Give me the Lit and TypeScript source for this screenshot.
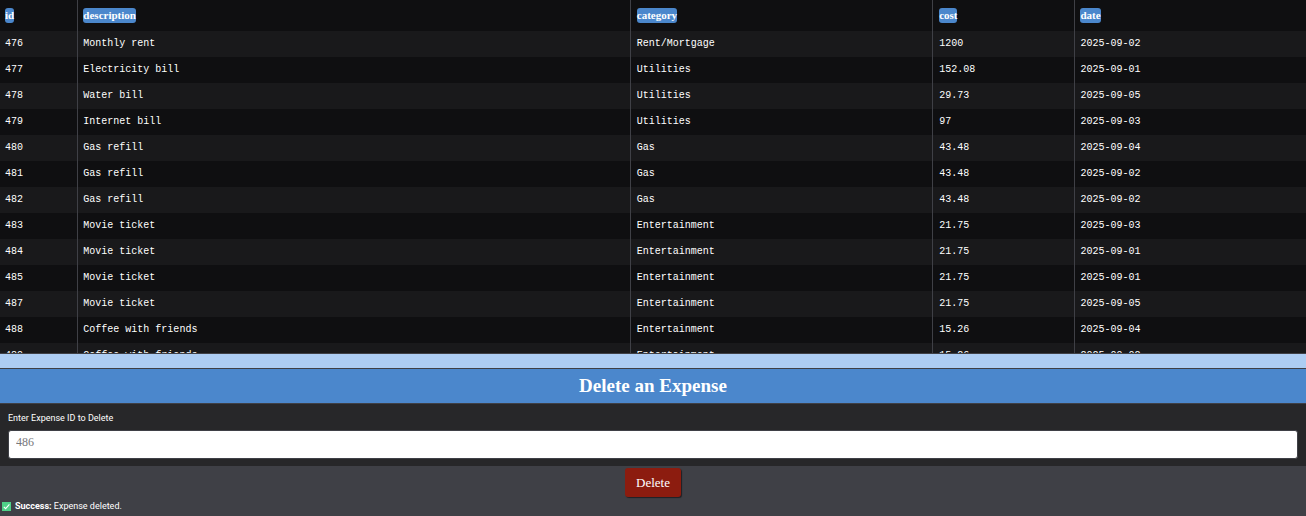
import { LitElement, html, css } from "lit";
import { customElement, state } from "lit/decorators.js";

interface Expense {
  id: number;
  description: string;
  category: string;
  cost: string;
  date: string;
}

const row = (id: number, description: string, category: string, cost: string, date: string): Expense => ({
  id,
  description,
  category,
  cost,
  date,
});

const COLUMNS = ["id", "description", "category", "cost", "date"] as const;

@customElement("app-root")
export class AppRoot extends LitElement {
  @state() private expenses: Expense[] = [
    row(476, "Monthly rent", "Rent/Mortgage", "1200", "2025-09-02"),
    row(477, "Electricity bill", "Utilities", "152.08", "2025-09-01"),
    row(478, "Water bill", "Utilities", "29.73", "2025-09-05"),
    row(479, "Internet bill", "Utilities", "97", "2025-09-03"),
    row(480, "Gas refill", "Gas", "43.48", "2025-09-04"),
    row(481, "Gas refill", "Gas", "43.48", "2025-09-02"),
    row(482, "Gas refill", "Gas", "43.48", "2025-09-02"),
    row(483, "Movie ticket", "Entertainment", "21.75", "2025-09-03"),
    row(484, "Movie ticket", "Entertainment", "21.75", "2025-09-01"),
    row(485, "Movie ticket", "Entertainment", "21.75", "2025-09-01"),
    row(487, "Movie ticket", "Entertainment", "21.75", "2025-09-05"),
    row(488, "Coffee with friends", "Entertainment", "15.26", "2025-09-04"),
    row(489, "Coffee with friends", "Entertainment", "15.26", "2025-09-02"),
  ];

  static styles = css`
    :host {
      display: flex;
      flex-direction: column;
      height: 100vh;
      background: #3f4046;
      color: #fff;
      font-family: Roboto, "Noto Sans", sans-serif;
      font-size: 9px;
    }
    .table-wrap {
      flex: 1;
      min-height: 0;
      overflow: auto;
      scrollbar-width: none;
      background: #0f0f11;
      border-bottom: 1px solid #3f4046;
    }
    .grid {
      width: 100%;
      table-layout: fixed;
      border-collapse: separate;
      border-spacing: 0;
      text-align: left;
    }
    .col-id { width: 6%; }
    .col-description { width: 42.3%; }
    .col-category { width: 23.15%; }
    .col-cost { width: 10.9%; }
    .grid th,
    .grid td {
      box-sizing: border-box;
      height: 26px;
      padding: 0 5px;
      border-right: 1px solid #3f4046;
      white-space: nowrap;
    }
    .grid th:nth-child(n + 3),
    .grid td:nth-child(n + 3) {
      padding-left: 6px;
    }
    .grid th:last-child,
    .grid td:last-child {
      padding-left: 5px;
      border-right: 0;
    }
    .grid th {
      height: 31px;
      font: bold 11px/15px "Liberation Serif", serif;
    }
    .grid td {
      font: 10px/14px "Liberation Mono", monospace;
    }
    .grid tbody tr:nth-child(odd) {
      background: #19191b;
    }
    .tag {
      display: inline-block;
      background: #4b87cc;
      border-radius: 3px;
    }
    .band {
      height: 14px;
      background: #adcdf3;
      border-bottom: 1px solid #3f4046;
    }
    .title {
      margin: 0;
      padding: 5px 0;
      background: #4b87cc;
      border-bottom: 1px solid #3f4046;
      font: bold 19px/24px "Liberation Serif", serif;
      text-align: center;
    }
    .field {
      display: flex;
      flex-direction: column;
      gap: 6px;
      padding: 8px 8px 7px;
      background: #272729;
      line-height: 12px;
    }
    .input {
      box-sizing: border-box;
      width: 100%;
      height: 29px;
      padding: 0 7px 4px;
      border: 1px solid #3f4046;
      border-radius: 3px;
      background: #fff;
      color: #222;
      font: 12px "Liberation Serif", serif;
    }
    .input::placeholder {
      color: #77787c;
      opacity: 1;
    }
    .actions {
      display: flex;
      flex-direction: column;
      padding: 2px 2px 3px;
      gap: 3px;
    }
    .delete {
      align-self: center;
      height: 29px;
      padding: 0 11px;
      border: 0;
      border-radius: 3px;
      background: #8c1c0f;
      color: #fff;
      font: 13px "Liberation Serif", serif;
      box-shadow: 1px 1px 1px #202024;
    }
    .status {
      display: flex;
      align-items: center;
      gap: 4px;
      margin: 0;
      line-height: 13px;
    }
    .check {
      width: 9px;
      height: 9px;
    }
  `;

  render() {
    return html`
      <div class="table-wrap">
        <table class="grid">
          <colgroup>
            ${COLUMNS.map((name) => html`<col class="col-${name}" />`)}
          </colgroup>
          <thead>
            <tr>${COLUMNS.map((name) => html`<th scope="col"><span class="tag">${name}</span></th>`)}</tr>
          </thead>
          <tbody>
            ${this.expenses.map(
              (expense) => html`<tr>${COLUMNS.map((name) => html`<td>${expense[name]}</td>`)}</tr>`
            )}
          </tbody>
        </table>
      </div>
      <div class="band"></div>
      <h2 class="title">Delete an Expense</h2>
      <div class="field">
        <label for="expense-id">Enter Expense ID to Delete</label>
        <input class="input" id="expense-id" type="text" inputmode="numeric" placeholder="486" />
      </div>
      <div class="actions">
        <button class="delete" type="button">Delete</button>
        <p class="status" role="status">
          <svg class="check" viewBox="0 0 9 9" aria-hidden="true">
            <rect width="9" height="9" fill="#4fd188" />
            <path d="M1.8 4.8 3.6 6.6 7.4 2.3" fill="none" stroke="#fff" stroke-width="1.1" />
          </svg>
          <span><strong>Success:</strong> Expense deleted.</span>
        </p>
      </div>
    `;
  }
}
